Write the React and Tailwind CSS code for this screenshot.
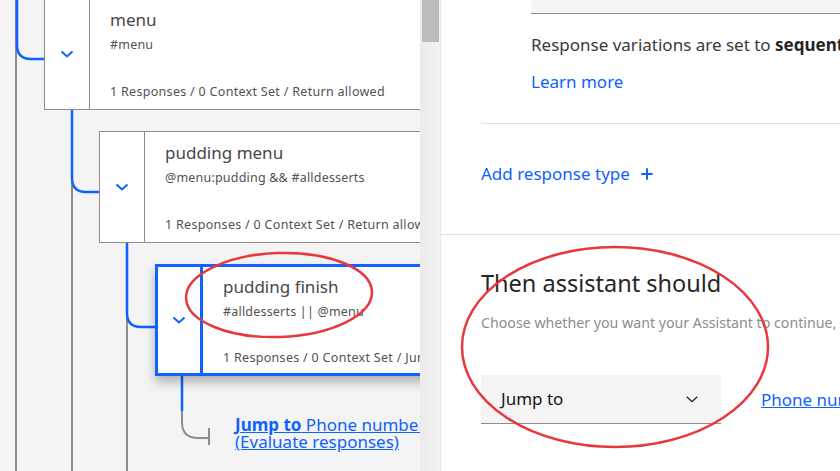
import { useState } from "react";

const font = { fontFamily: '"Noto Sans", "Open Sans", sans-serif' };

const Chevron = ({ className = "" }) => (
  <svg viewBox="0 0 16 16" className={`w-[16px] h-[16px] ${className}`} fill="none">
    <path d="M2.5 5.5 8 10.5 13.5 5.5" stroke="currentColor" strokeWidth="2" />
  </svg>
);

function NodeCard({ title, condition, footer, selected, className = "" }) {
  const border = selected ? "border-[3px] border-[#0f62fe] shadow-[0_6px_10px_rgba(0,0,0,0.28)]" : "border border-[#8d8d8d]"
  const divider = selected ? "border-r-[3px] border-[#0f62fe]" : "border-r border-[#8d8d8d]"
  return (
    <div className={`relative z-10 flex h-[112px] w-[420px] shrink-0 bg-white ${border} ${className}`}>
      <div className={`flex w-[45px] shrink-0 items-center justify-center text-[#0f62fe] ${divider} ${selected ? "w-[43px]" : ""}`}>
        <Chevron />
      </div>
      <div className={`flex flex-1 flex-col pl-[20px] ${selected ? "pt-[8px] pb-[6px]" : "pt-[9px] pb-[8px]"}`}>
        <p className="text-[17px] leading-[24px] text-[#474747] whitespace-nowrap">{title}</p>
        <p className="mt-[4px] text-[12.5px] leading-[18px] tracking-[0.2px] text-[#525252] whitespace-nowrap">{condition}</p>
        <p className="mt-auto text-[12.5px] leading-[18px] tracking-[0.3px] text-[#525252] whitespace-nowrap">{footer}</p>
      </div>
    </div>
  )
}

function Tree() {
  return (
    <div className="relative h-full w-[420px] shrink-0 overflow-hidden bg-[#f4f4f4]">
      <svg className="absolute inset-0 z-0" width="420" height="471" fill="none">
        <g stroke="#8d8d8d" strokeWidth="2">
          <path d="M16 0V471" />
          <path d="M72 110V471" />
          <path d="M127 243V471" />
          <path d="M182 410V422Q182 438 198 438H209" />
          <path d="M209 428V445" />
        </g>
        <g stroke="#0f62fe" strokeWidth="2.5">
          <path d="M17 0V45Q17 59 31 59H45" />
          <path d="M72 110V178Q72 192 86 192H100" />
          <path d="M127 243V313Q127 327 141 327H156" />
          <path d="M182 376V411" />
        </g>
      </svg>

      <div className="flex flex-col">
        <NodeCard
          className="ml-[44px] mt-[-2px]"
          title="menu"
          condition="#menu"
          footer="1 Responses / 0 Context Set / Return allowed"
        />
        <NodeCard
          className="ml-[99px] mt-[21px]"
          title="pudding menu"
          condition="@menu:pudding && #alldesserts"
          footer="1 Responses / 0 Context Set / Return allowed"
        />
        <NodeCard
          selected
          className="ml-[155px] mt-[21px]"
          title="pudding finish"
          condition="#alldesserts || @menu"
          footer="1 Responses / 0 Context Set / Jump to Phone number"
        />
        <a className="relative z-10 ml-[235px] mt-[40px] flex flex-col text-[17px] leading-[17px] text-[#0f62fe] underline whitespace-nowrap">
          <span><b>Jump to</b> Phone number</span>
          <span>(Evaluate responses)</span>
        </a>
      </div>
    </div>
  )
}

function Scrollbar() {
  return (
    <div className="h-full w-[20px] shrink-0 bg-gradient-to-r from-[#ebebeb] to-[#f3f3f3] pl-[2px] pr-[1px]">
      <div className="h-[42px] w-full bg-[#bcbcbc]" />
    </div>
  )
}

function EditorPanel() {
  const [action] = useState("Jump to")
  return (
    <div className="h-full flex-1 overflow-hidden border-l border-[#e6e6e6] bg-white">
      <div className="pl-[40px]">
        <div className="ml-[50px]">
          <div className="h-[14px] w-[400px] border-b border-[#8d8d8d] bg-[#f4f4f4]" />
          <p className="mt-[19px] text-[17px] leading-[24px] text-[#393939] whitespace-nowrap">
            Response variations are set to <span className="font-bold text-[#262626]">sequential</span>
          </p>
          <a className="mt-[13px] block text-[17px] leading-[24px] text-[#0f62fe]">Learn more</a>
        </div>
        <div className="mt-[29px] h-px bg-[#e0e0e0]" />
        <button className="mt-[38px] flex items-center gap-[10px] text-[17px] leading-[24px] text-[#0f62fe]">
          Add response type
          <svg viewBox="0 0 16 16" className="h-[14px] w-[14px]" fill="none">
            <path d="M8 1.5V14.5M1.5 8H14.5" stroke="currentColor" strokeWidth="2.2" />
          </svg>
        </button>
      </div>
      <div className="mt-[48px] h-px bg-[#e0e0e0]" />
      <div className="px-[40px]">
        <h2 className="mt-[32px] text-[23.5px] leading-[32px] font-normal text-[#262626] whitespace-nowrap">Then assistant should</h2>
        <p className="mt-[14px] text-[14.2px] leading-[20px] text-[#8d8d8d] whitespace-nowrap">
          Choose whether you want your Assistant to continue, or wait for the user to respond.
        </p>
        <div className="mt-[42px] flex items-center gap-[40px]">
          <div className="flex h-[49px] w-[240px] shrink-0 items-center justify-between border-b border-[#8d8d8d] bg-[#f4f4f4] pl-[20px] pr-[22px]">
            <span className="text-[17px] text-[#161616]">{action}</span>
            <svg viewBox="0 0 16 16" className="h-[14px] w-[14px]" fill="none">
              <path d="M2 5.5 8 11 14 5.5" stroke="#161616" strokeWidth="1.4" />
            </svg>
          </div>
          <a className="text-[17px] text-[#0f62fe] underline whitespace-nowrap">Phone number</a>
        </div>
      </div>
    </div>
  )
}

export default function App() {
  return (
    <div style={font} className="relative flex h-[471px] w-[840px] overflow-hidden">
      <Tree />
      <Scrollbar />
      <EditorPanel />

      {/* hand-drawn annotation marks */}
      <svg className="pointer-events-none absolute inset-0 z-20" width="840" height="471" fill="none">
        <ellipse cx="279" cy="295" rx="93" ry="42" stroke="#e8383b" strokeWidth="2.5" transform="rotate(-2 279 295)" />
        <ellipse cx="615" cy="347" rx="153" ry="100" stroke="#e8383b" strokeWidth="2.5" />
      </svg>
    </div>
  )
}
